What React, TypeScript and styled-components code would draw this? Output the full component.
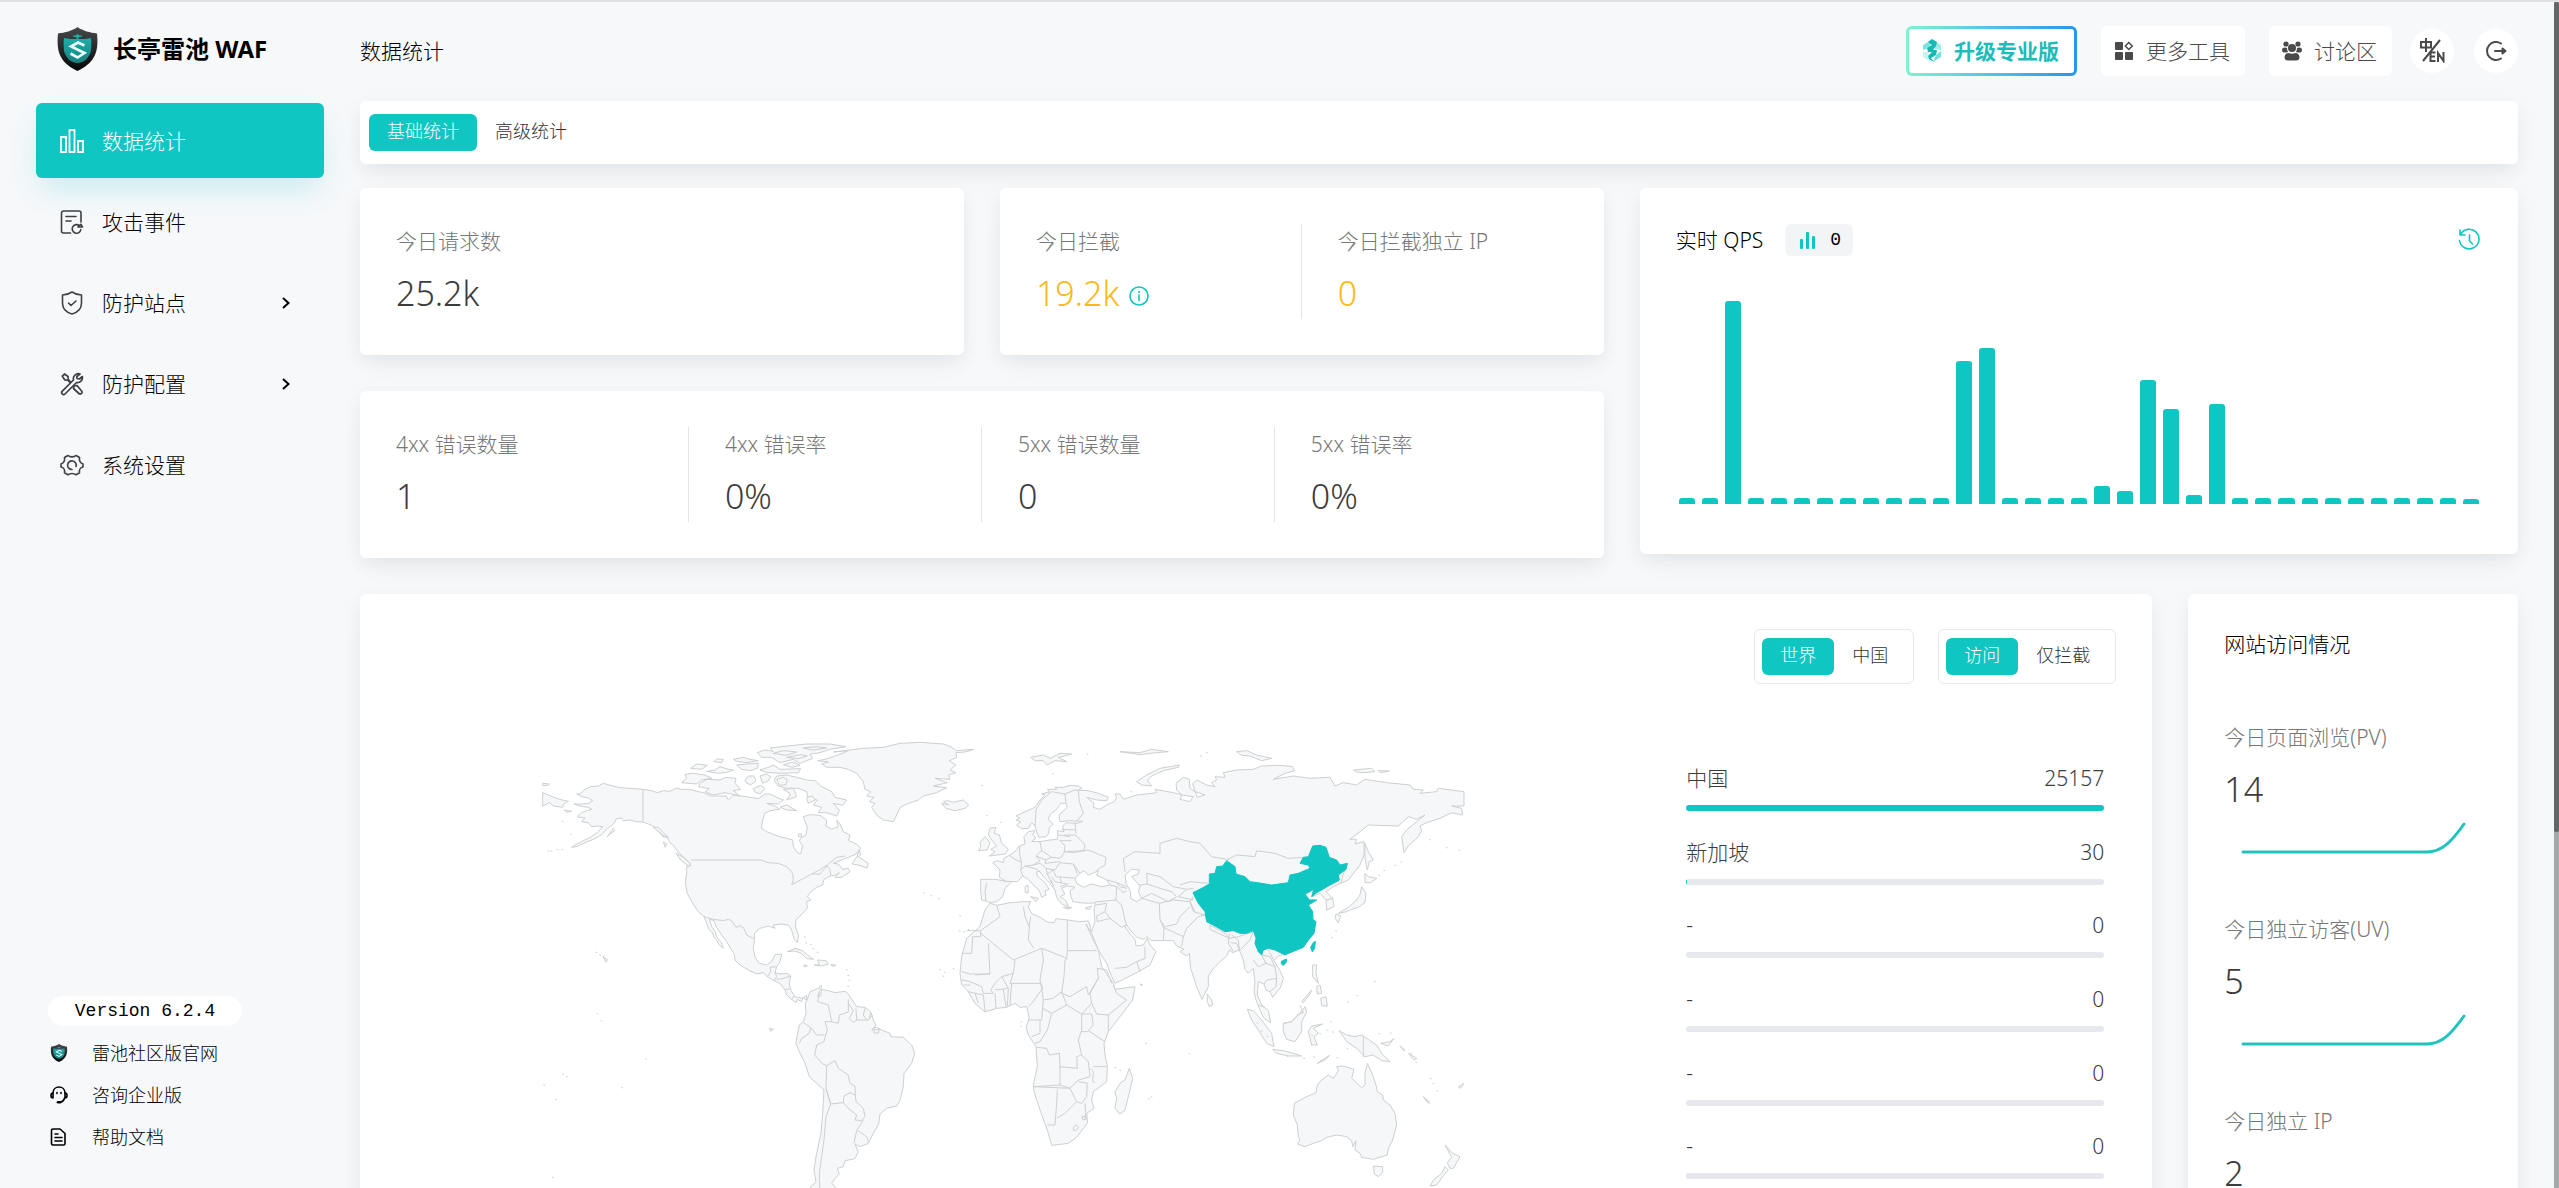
import React, { useState } from "react";
import styled, { createGlobalStyle, css } from "styled-components";

const TEAL = "#0fc6c2";
const SANS = `"Noto Sans", "Noto Sans CJK SC", sans-serif`;
const MONO = `"Liberation Mono", monospace`;

const GlobalStyle = createGlobalStyle`
  * { box-sizing: border-box; }
  body {
    margin: 0;
    background: #f6f8fa;
    font-family: ${SANS};
    font-size: 21px;
    font-weight: 300;
    line-height: 36px;
    color: #000;
  }
  button { font: inherit; color: inherit; border: 0; background: none; padding: 0; cursor: pointer; }
  a { color: inherit; text-decoration: none; }
  svg { display: block; flex: none; }
  h1, h2, ul { margin: 0; padding: 0; }
  ul { list-style: none; }
`;

/* ---------- shell ---------- */

const Shell = styled.div`
  display: flex;
  height: 100vh;
  overflow: hidden;
  border-top: 2px solid #dfe1e3;
`;

const Sidebar = styled.aside`
  flex: 0 0 360px;
  display: flex;
  flex-direction: column;
  padding: 0 36px 33px;
`;

const Brand = styled.div`
  display: flex;
  align-items: center;
  gap: 15px;
  height: 101px;
  padding: 0 21px 8px;
  font-size: 24px;
  font-weight: 700;
`;

const Nav = styled.nav`
  display: flex;
  flex-direction: column;
  gap: 6px;
  flex: 1;
`;

const NavItem = styled.a<{ $active?: boolean }>`
  display: flex;
  align-items: center;
  gap: 18px;
  height: 75px;
  padding: 0 34px 0 24px;
  border-radius: 6px;
  ${(p) =>
    p.$active &&
    css`
      color: #fff;
      background: ${TEAL};
      box-shadow: 0 15px 30px -6px rgba(15, 198, 194, 0.22);
    `}
  & > svg:first-child { color: ${(p) => (p.$active ? "#fff" : "#3d4045")}; }
`;

const NavText = styled.span`
  flex: 1;
`;

const SideFoot = styled.footer`
  display: flex;
  flex-direction: column;
  align-items: flex-start;
  gap: 6px;
  padding-left: 12px;
  font-size: 18px;
`;

const Version = styled.div`
  width: 194px;
  margin-bottom: 3px;
  border-radius: 15px;
  background: #fff;
  font: 400 18px/30px ${MONO};
  text-align: center;
`;

const FootLink = styled.a`
  display: flex;
  align-items: center;
  gap: 24px;
  padding-left: 2px;
`;

const Main = styled.main`
  flex: 1;
  min-width: 0;
  padding-right: 41px;
`;

const TopBar = styled.header`
  display: flex;
  align-items: center;
  justify-content: space-between;
  height: 99px;
  padding-bottom: 2px;
`;

const PageTitle = styled.h1`
  font-size: 21px;
  font-weight: 300;
`;

const Actions = styled.div`
  display: flex;
  align-items: center;
  gap: 24px;
  color: #4a4a4a;
`;

const ActionButton = styled.button`
  display: flex;
  align-items: center;
  gap: 12px;
  height: 50px;
  padding: 0 15px 0 13px;
  border-radius: 6px;
  background: #fff;
`;

const UpgradeButton = styled(ActionButton)`
  border: 3px solid transparent;
  background:
    linear-gradient(#fff, #fff) padding-box,
    linear-gradient(90deg, #7cf5cf, #2196f3) border-box;
  color: #1cbcb9;
  font-weight: 700;
`;

const RoundGroup = styled.div`
  display: flex;
  gap: 20px;
  margin-left: -6px;
`;

const RoundButton = styled.button`
  display: grid;
  place-items: center;
  width: 44px;
  height: 44px;
  border-radius: 50%;
  background: #fff;
`;

/* ---------- cards ---------- */

const Card = styled.section`
  background: #fff;
  border-radius: 6px;
  box-shadow: 0 6px 18px rgba(20, 30, 40, 0.06), 0 15px 30px -6px rgba(20, 30, 40, 0.03);
`;

const TabBar = styled(Card)`
  display: flex;
  align-items: center;
  height: 63px;
  padding: 0 9px;
  margin-bottom: 24px;
`;

const Tab = styled.button<{ $active?: boolean }>`
  height: 37px;
  padding: 0 18px 2px;
  border-radius: 6px;
  font-size: 18px;
  line-height: 33px;
  color: ${(p) => (p.$active ? "#fff" : "#333")};
  background: ${(p) => (p.$active ? TEAL : "transparent")};
`;

const Grid = styled.div`
  display: grid;
  grid-template-columns: repeat(12, minmax(0, 1fr));
  gap: 36px;
  align-items: start;
`;

const Stats = styled.div`
  grid-column: span 7;
  display: grid;
  grid-template-columns: 1fr 1fr;
  gap: 36px;
`;

const StatCard = styled(Card)<{ $wide?: boolean }>`
  display: grid;
  grid-auto-flow: column;
  grid-auto-columns: minmax(0, 1fr);
  padding: 36px;
  grid-column: ${(p) => (p.$wide ? "span 2" : "auto")};
`;

const Stat = styled.div<{ $warn?: boolean }>`
  & + & { padding-left: 36px; }
  &:not(:last-child) { border-right: 1px solid #e3e5e8; }
  color: ${(p) => (p.$warn ? "#fbb91b" : "#3c3c3c")};
`;

const Label = styled.div`
  line-height: 34px;
  color: #777;
`;

const Value = styled.div`
  display: flex;
  align-items: center;
  gap: 10px;
  padding-top: 9px;
  font-size: 34px;
  line-height: 52px;
  & > svg { margin-top: 6px; }
`;

const QpsCard = styled(Card)`
  grid-column: span 5;
  padding: 36px 36px 50px;
`;

const QpsHead = styled.header`
  display: flex;
  align-items: center;
  gap: 22px;
  height: 32px;
  & > :last-child { margin-left: auto; color: ${TEAL}; }
`;

const CardTitle = styled.h2`
  font-size: 21px;
  font-weight: 300;
`;

const QpsBadge = styled.span`
  display: flex;
  align-items: center;
  gap: 15px;
  height: 32px;
  padding: 0 12px 0 15px;
  border-radius: 6px;
  background: #f3f4f5;
  font: 400 18px/32px ${MONO};
`;

const Bars = styled.div`
  display: flex;
  align-items: flex-end;
  gap: 7px;
  height: 248px;
  padding: 0 3px;
`;

const Bar = styled.div`
  flex: 1;
  border-radius: 3px 3px 0 0;
  background: ${TEAL};
`;

/* ---------- map ---------- */

const MapCard = styled(Card)`
  grid-column: span 10;
  padding: 35px 36px 36px;
`;

const Switches = styled.div`
  display: flex;
  justify-content: flex-end;
  gap: 24px;
`;

const Switch = styled.div`
  display: flex;
  padding: 8px 7px;
  border: 1px solid #e6e8eb;
  border-radius: 6px;
`;

const MapBody = styled.div`
  display: flex;
  align-items: flex-start;
  gap: 82px;
  padding: 36px 12px 0 0;
`;

const MapArea = styled.div`
  flex: 1;
  display: flex;
  justify-content: center;
  align-items: flex-start;
  & > svg { width: 100%; max-width: 960px; height: auto; }
`;

const Ranks = styled.ul`
  flex: 0 0 418px;
  display: grid;
  grid-auto-rows: 1fr;
  height: 442px;
  margin-top: 40px;
  color: #3c3c3c;
`;

const Rank = styled.li`
  display: flex;
  flex-direction: column;
  gap: 9px;
`;

const RankRow = styled.div`
  display: flex;
  justify-content: space-between;
`;

const Track = styled.div`
  height: 6px;
  border-radius: 3px;
  background: #e6e8ed;
  overflow: hidden;
`;

const Fill = styled.div`
  height: 6px;
  background: ${TEAL};
`;

const VisitCard = styled(Card)`
  grid-column: span 2;
  padding: 32px 36px;
`;

const Visit = styled.div`
  height: 156px;
  margin-top: 36px;
  color: #3c3c3c;
`;

const VisitList = styled.div`
  padding-top: 22px;
`;

const Spark = styled.svg`
  margin: 4px 0 0 15px;
`;

const ScrollTrack = styled.div`
  position: fixed;
  top: 2px;
  right: 0;
  bottom: 0;
  width: 5px;
  background: #a6a9a9;
`;

const ScrollThumb = styled.div`
  height: 70%;
  border-radius: 2px;
  background: #626665;
`;

/* ---------- icons ---------- */

const Shield = ({ w, h }: { w: number; h: number }) => (
  <svg width={w} height={h} viewBox="0 0 41 44">
    <defs>
      <linearGradient id="shieldBody" x1="0" y1="0" x2="0" y2="1">
        <stop offset="0" stopColor="#46494b" />
        <stop offset="1" stopColor="#060707" />
      </linearGradient>
      <linearGradient id="shieldDisc" x1="0" y1="0" x2="0" y2="1">
        <stop offset="0" stopColor="#1fb5b0" />
        <stop offset="1" stopColor="#17807f" />
      </linearGradient>
    </defs>
    <path d="M20.500 0C15 4 8 5.500 1 6.500C-.5 22 1 35 20.500 44C40 35 41.500 22 40 6.500C33 5.500 26 4 20.500 0Z" fill="url(#shieldBody)" />
    <path d="M20.500 7L22.500 8.500H25.500L24 10H21.500V12C26 12 30 12 34 11C34.500 14 34.500 18 34 24C32 31 27 36 20.500 36C14 36 9 31 7 24C6.500 18 6.500 14 7 11C11 12 15 12 19.500 12V10H17L15.500 8.500H18.500Z" fill="url(#shieldDisc)" />
    <path d="M27.500 18.500L21 15.500L14 19.500L27.500 26L20.500 30.500L13.500 26.500" fill="none" stroke="#e8fffd" strokeWidth="2.600" />
  </svg>
);

type IconProps = { size?: number; box?: number; children: React.ReactNode; sw?: number };
const Line = ({ size = 24, box = 24, sw = 1.6, children }: IconProps) => (
  <svg width={size} height={size} viewBox={`0 0 ${box} ${box}`} fill="none" stroke="currentColor" strokeWidth={sw} strokeLinecap="round" strokeLinejoin="round">
    {children}
  </svg>
);

const StatsIcon = () => (
  <Line sw={1.8}>
    <path strokeLinejoin="miter" d="M1 8H6V23H1ZM9.500 1H14.500V23H9.500ZM18 12H23V23H18Z" />
  </Line>
);
const EventsIcon = () => (
  <Line>
    <path d="M10.500 23H3.500A2 2 0 0 1 1.500 21V3A2 2 0 0 1 3.500 1H19A2 2 0 0 1 21 3V12M6 6.500H16M6 11H11" />
    <path d="M19.500 15.800A4.300 4.300 0 1 0 20.800 19.500M18 17H22.500L20.800 14.300Z" />
  </Line>
);
const SiteIcon = () => (
  <Line>
    <path d="M12 1C9 3 5.500 4 2.500 4V12C2.500 17.500 6.500 21.500 12 23C17.500 21.500 21.500 17.500 21.500 12V4C18.500 4 15 3 12 1ZM8.500 12L11 14.500L16 10" />
  </Line>
);
const ConfigIcon = () => (
  <Line sw={1.7}>
    <path d="M10.500 10L8.300 7.600L8 4.500L4.500 2L2.300 4.200L4.700 7.800L7.800 8.200L10 10.500M14 14L17 13.500L22 19.500Q22.500 22 19.500 22L13.500 16.500Z" />
    <path d="M20 2A5 5 0 0 0 13.500 8L2.300 19.200A1.800 1.800 0 0 0 5 22L16.500 10.500A5 5 0 0 0 22.300 4.500L19.500 7L17 6.500L16.800 4.500Z" />
  </Line>
);
const SettingIcon = () => (
  <Line>
    <path d="M8 2.500C10 4.300 14 4.300 16 2.500L19.500 4.500C19 7.500 20.500 10 23 11V14C20.500 14.500 19 17 19.500 19.800L16 21.800C14 20 10 20 8 21.800L4.500 19.800C5 17 3.500 14.500 1 14V11C3.500 10 5 7.500 4.500 4.500Z" />
    <path d="M12 16.500A4.300 4.300 0 1 1 16 13.500" />
  </Line>
);
const Chevron = () => (
  <svg width="8" height="12" viewBox="0 0 8 12" fill="none" stroke="#000" strokeWidth="2">
    <path d="M1 1L6.500 6L1 11" />
  </svg>
);
const Headset = () => (
  <Line size={18} box={18} sw={1.6}>
    <path d="M3 7C3 -1 15 -1 15 7M14.500 12C14 14.500 12 16 9.500 16.200" />
    <path d="M3 7Q1 7 1 9.500Q1 12 3 12ZM15 7Q17 7 17 9.500Q17 12 15 12ZM7 6.500V7.500M11 6.500V7.500" />
    <path d="M8 16.200H10" strokeWidth="2.600" />
  </Line>
);
const Doc = () => (
  <Line size={18} box={18} sw={1.6}>
    <path d="M3 1H10L15 5.500V15.500A1.500 1.500 0 0 1 13.500 17H3A1.500 1.500 0 0 1 1.500 15.500V2.500A1.500 1.500 0 0 1 3 1ZM5 6H8M5 9.500H12M5 13H12" />
  </Line>
);
const UpgradeIcon = () => (
  <svg width="20" height="24" viewBox="0 0 20 24">
    <path d="M9 1L1 6V11L7 9L9 5Z" fill="#7fe3df" />
    <path d="M1 13L7 13L6 18L9 23L1 18Z" fill="#c5f3f1" />
    <path d="M13 2L19 6V11L13 10Z" fill="#9feae7" />
    <path d="M19 12V18L11 23L14 16Z" fill="#74dfdb" />
    <path d="M10 0L15 3L14 7L11 11L15 11L14 16L9 19L12 23L7 20L6 17L10 13L6 13L5 9L10 6L6 3Z" fill="#17b9b4" />
  </svg>
);
const ToolsIcon = () => (
  <svg width="20" height="20" viewBox="-1 -1 20 20" fill="#4a4a4a">
    <rect width="8" height="8" rx="1" />
    <rect y="10" width="8" height="8" rx="1" />
    <rect x="10" y="10" width="8" height="8" rx="1" />
    <path d="M13.800 .5L17.300 4L13.800 7.500L10.300 4Z" fill="none" stroke="#4a4a4a" strokeWidth="1.500" />
  </svg>
);
const PeopleIcon = () => (
  <svg width="20" height="20" viewBox="0 0 20 20" fill="#4a4a4a">
    <circle cx="4" cy="3" r="2.600" />
    <circle cx="16" cy="3" r="2.600" />
    <circle cx="10" cy="7" r="4" />
    <path d="M0 9Q0 6.500 3 6.500L5 7Q5 9.500 6 11L4 11.500Q0 12 0 9ZM20 9Q20 6.500 17 6.500L15 7Q15 9.500 14 11L16 11.500Q20 12 20 9Z" />
    <path d="M2.500 16Q3 12.300 6.500 12Q10 13.500 13.500 12Q17 12.300 17.500 16Q17.500 19.500 14 19.500H6Q2.500 19.500 2.500 16Z" />
  </svg>
);
const LangIcon = () => (
  <svg width="25" height="25" viewBox="0 0 25 25" fill="none" stroke="#4a4a4a" strokeWidth="2">
    <path d="M1 4H11V9.500H1ZM6 0V14M20 2L3 23" />
    <path d="M15.500 14.500H10.500V23H15.500M10.500 18.500H15M18 24V15L23.500 23V14" />
  </svg>
);
const ExitIcon = () => (
  <Line size={22} box={22} sw={2}>
    <path d="M16 3.500A9 9 0 1 0 16 18.500M10 11H20" />
    <path d="M17.500 8.500L20.500 11L17.500 13.500Z" fill="currentColor" />
  </Line>
);
const InfoIcon = () => (
  <svg width="20" height="20" viewBox="0 0 20 20" fill="none" stroke={TEAL} strokeWidth="1.600">
    <circle cx="10" cy="10" r="9" />
    <path d="M10 8.500V15M10 5V7" />
  </svg>
);
const MiniBars = () => (
  <svg width="15" height="17" viewBox="0 0 15 17" fill={TEAL}>
    <rect y="7" width="3" height="10" rx="1" />
    <rect x="6" width="3" height="17" rx="1" />
    <rect x="12" y="4" width="3" height="13" rx="1" />
  </svg>
);
const HistoryIcon = () => (
  <Line size={24} box={24} sw={1.6}>
    <path d="M2.500 6.500A9.800 9.800 0 1 1 1.500 12.500M2 2V7H7M11.500 7V13L14.500 16" />
  </Line>
);

/* ---------- world map data ---------- */

const WEST_LAND = [
  "369,208 340,206 300,203 262,194 250,190 235,198 212,200 195,208 180,222 170,222 185,230 205,234 218,242 205,250 185,252 162,252 180,258 205,262 215,268 200,272 185,278 172,290 180,292 195,294 185,305 205,308 215,320 235,318 248,320 235,335 215,350 190,362 165,375 155,382 175,378 200,366 225,356 245,344 262,326 280,312 290,296 305,294 310,302 330,300 350,305 369,306 385,312 400,318 410,330 425,345 430,352 440,350 450,368 462,378 470,390 480,402 495,415 508,428 512,438 500,440 500,460 496,490 502,520 515,545 535,575 552,590 560,610 565,625 578,640 582,652 590,660 598,675 610,685 604,668 590,650 585,635 575,620 568,598 582,602 590,622 605,645 620,665 635,690 642,700 645,720 660,735 685,750 710,762 730,758 742,770 762,782 780,790 795,810 800,825 815,838 828,848 832,838 845,845 850,832 860,842 860,826 845,835 825,830 812,810 808,790 812,768 800,760 780,762 765,758 770,740 780,725 785,702 765,704 755,725 740,735 718,730 705,712 700,685 704,655 703,640 720,625 745,618 765,625 760,615 785,612 805,615 815,630 822,655 832,668 836,648 826,620 828,600 840,588 862,565 860,545 872,540 862,530 872,515 890,502 908,495 912,478 930,468 948,465 958,458 945,472 965,472 990,455 985,445 968,448 955,432 940,430 965,420 990,410 1008,402 1022,385 1010,372 985,362 990,345 970,335 960,312 950,300 955,320 935,328 918,318 920,300 900,286 870,284 850,290 855,305 862,320 858,345 842,355 838,362 848,378 842,402 832,398 820,380 818,360 800,355 785,352 765,345 740,335 724,325 728,300 735,280 750,272 780,268 765,258 740,250 775,252 790,240 770,232 750,222 735,222 715,236 690,232 665,228 640,226 625,240 618,228 575,228 550,218 530,214 510,208 485,208 470,204 450,214 430,212 412,218 395,212",
  "862,838 870,815 895,805 902,795 905,800 898,815 893,830 902,828 905,808 925,812 945,818 975,814 985,822 1000,845 1010,860 1035,862 1052,875 1060,900 1068,915 1055,930 1080,928 1110,940 1112,950 1150,952 1175,975 1184,1000 1175,1030 1152,1060 1150,1100 1140,1140 1130,1158 1100,1165 1080,1182 1076,1212 1060,1240 1045,1270 1020,1280 1005,1272 1015,1295 1005,1316 975,1322 970,1340 952,1345 958,1362 945,1375 935,1390 950,1404 960,1450 940,1510 890,1510 880,1450 872,1400 888,1385 882,1350 888,1310 903,1240 908,1180 912,1110 890,1090 868,1070 855,1030 838,995 828,970 832,945 838,915 850,905 858,880 856,850",
  "893,122 915,118 955,105 985,92 940,96 1030,85 1090,82 1140,70 1200,67 1270,72 1292,80 1310,92 1362,88 1335,96 1308,98 1310,112 1288,122 1308,135 1290,150 1308,158 1285,165 1290,178 1245,175 1282,188 1240,198 1280,203 1250,218 1210,228 1195,240 1160,252 1140,262 1130,285 1120,305 1090,300 1070,285 1055,262 1065,250 1048,245 1062,232 1040,228 1052,215 1035,208 1030,185 1010,160 985,148 960,142 920,142 905,132 925,126",
  "1265,250 1285,254 1270,244 1285,242 1300,247 1330,240 1346,255 1335,265 1305,272 1278,265",
  "495,163 520,160 555,165 575,175 545,180 530,192 485,188 500,175",
  "540,190 560,178 600,180 618,172 648,175 645,190 662,208 640,212 660,228 615,218 580,225 555,215 568,206 535,200",
  "762,182 770,168 800,165 830,172 860,180 885,182 905,200 935,215 945,232 980,240 968,256 940,250 958,270 950,288 920,278 895,278 905,262 880,255 892,240 865,235 860,215 835,205 800,205 775,198",
  "712,98 735,90 760,94 750,84 800,78 860,72 930,72 978,80 930,88 900,98 870,102 878,115 840,130 820,118 780,128 755,112 725,112",
  "720,150 745,142 760,135 780,148 842,146 835,158 780,160 740,157",
  "512,145 530,132 562,136 545,148",
  "560,154 585,150 600,140 625,148 640,150 620,157 595,160",
  "582,125 590,117 610,118 605,128",
  "640,118 670,112 690,118 715,122 680,128 650,124",
  "650,135 680,132 715,130 712,145 690,152 665,148",
  "675,182 685,168 702,168 708,182 692,195 678,188",
  "720,168 740,162 752,170 745,182 728,190",
  "700,206 722,196 735,205 720,222 705,216",
  "770,178 790,172 802,180 798,194 778,196",
  "790,208 820,205 830,230 800,240 812,222",
  "860,232 878,228 886,240 865,250",
  "780,262 800,255 830,272 800,270",
  "835,342 845,342 845,350 836,350",
  "760,100 790,92 830,96 800,106",
  "800,112 840,104 862,108 835,116",
  "790,134 820,126 840,136 815,142",
  "850,84 890,80 920,84 880,90",
  "400,322 415,322 430,338 445,352 432,348 415,334",
  "430,366 440,372 436,382",
  "1018,388 1022,405 1015,410 1045,430 1040,445 1020,436 996,432 1012,408",
  "468,400 490,412 512,432 505,438 482,420",
  "802,695 825,685 848,692 862,704 880,718 860,716 845,700 825,693",
  "882,735 898,735 893,720 918,722 925,732 905,738",
  "850,735 862,737 855,741",
  "932,734 947,735 942,740",
  "68,218 92,228 118,238 145,244 130,252 128,262 100,258 88,248 68,258",
  "68,190 88,192 84,196 68,197",
  "132,270 155,274 140,277",
  "250,712 262,718 258,727",
  "262,350 280,325 284,332 268,344",
  "748,925 760,928 752,934",
];

const WEST_BORDERS = [
  "M369,208V304",
  "M512,420H722L745,428 775,430 800,440 818,460 820,480 815,494 845,478 875,462 905,446 918,436 930,448 932,466M875,462H900L925,432 950,412 975,408",
  "M552,590 580,598 610,602 625,598 635,602 648,622 660,617 672,625 680,645 703,657",
  "M742,770 752,755 750,742 768,740M762,782 770,770 765,758M770,778 790,775 812,768M795,810 808,806M815,838 822,828",
  "M898,818 893,845 925,855 935,905 955,910 958,885 985,876 985,838M985,850 1000,872 988,895 1000,908 1010,900 1008,865M1010,900 1045,900 1058,885M1035,865 1030,885 1040,900M1052,878 1046,898",
  "M935,905 915,905 922,928 912,965 890,975 884,1005 908,1032 920,1037 945,1022 955,1045 985,1065 990,1090 1005,1098 1006,1125",
  "M850,908 872,922 868,940 845,955 838,970M872,922 890,945 914,945",
  "M920,1037 918,1105 932,1152 970,1148 972,1128 990,1118 1006,1125 1008,1145 1030,1165 1035,1190 1025,1202 1005,1200 1010,1185 985,1165 970,1148",
  "M918,1105 932,1152 918,1190 912,1260 905,1310 898,1360 902,1500M1030,1200 1010,1232 1002,1270M1012,1230 1042,1252 1045,1268",
  "M1062,922 1078,925 1075,940 1062,938Z",
];

const EAST_LAND = [
  // Eurasia
  "62,478 105,478 138,484 118,472 120,450 98,428 112,422 130,428 132,415 148,406 165,395 178,378 195,372 192,350 205,335 225,332 218,345 228,355 215,364 240,365 270,360 292,358 294,345 292,332 312,335 308,318 318,308 350,310 368,304 330,302 300,305 297,285 322,262 318,250 302,250 290,268 272,282 264,298 280,312 268,322 266,340 258,350 236,352 230,335 225,318 215,308 205,325 185,326 170,315 182,305 168,300 180,295 168,288 195,275 225,262 240,240 255,225 245,222 270,215 262,208 290,208 285,202 310,202 330,196 355,198 365,205 355,210 385,212 415,220 445,232 440,242 410,240 380,232 402,250 400,262 420,268 440,255 462,245 470,235 465,222 480,222 490,238 530,225 560,222 590,218 585,208 640,218 665,225 660,238 690,245 700,230 665,225 650,210 648,190 670,172 688,178 690,205 705,215 712,232 735,225 705,215 698,192 710,180 740,195 765,200 755,188 770,180 765,170 795,172 790,158 830,150 880,148 905,138 960,136 998,140 1003,152 970,162 940,178 1000,168 1050,175 1110,172 1125,198 1150,188 1190,195 1215,178 1280,188 1350,195 1360,208 1390,210 1380,220 1430,215 1435,205 1512,215 1512,258 1475,258 1505,265 1508,285 1475,278 1440,295 1400,308 1380,318 1385,332 1375,350 1345,378 1332,398 1325,350 1340,330 1370,305 1395,285 1370,298 1345,290 1315,318 1225,315 1200,335 1170,358 1190,358 1185,372 1212,365 1212,405 1200,435 1165,480 1142,490 1120,500 1098,515 1118,535 1122,560 1100,570 1098,540 1080,520 1055,530 1060,508 1035,525 1048,540 1070,540 1045,555 1058,575 1062,640 1030,680 985,700 955,708 942,722 960,752 970,775 962,802 938,832 930,815 918,810 912,792 895,785 892,825 905,855 925,872 932,908 912,895 900,870 888,840 882,815 885,785 880,745 865,760 855,748 850,720 838,690 818,698 808,690 800,708 780,725 760,745 745,768 745,800 726,838 710,800 692,745 688,700 680,708 660,695 672,688 650,678 640,662 610,662 575,662 560,650 552,658 530,652 510,630 500,615 494,618 510,642 525,658 528,678 550,675 562,655 568,672 588,695 570,735 530,758 465,790 455,770 440,730 415,690 395,640 385,618 395,635 405,605 402,570 406,548 385,550 360,548 338,545 332,525 330,512 345,502 322,498 305,505 315,522 300,530 318,542 325,560 305,552 290,532 285,510 270,490 250,470 240,455 230,455 232,468 252,485 268,508 255,512 258,525 245,532 238,512 215,490 205,478 188,468 172,485 155,485 135,505 128,530 110,545 90,548 78,543 65,540 62,510",
  // Africa
  "90,550 110,556 150,548 190,545 212,545 205,560 214,580 240,592 262,606 282,608 288,596 325,600 355,605 385,603 392,622 388,630 378,612 395,650 415,690 425,740 460,790 465,808 525,800 518,840 480,890 445,935 432,970 435,1005 442,1040 440,1085 400,1115 395,1140 402,1165 380,1180 383,1208 350,1252 325,1270 275,1276 262,1230 240,1170 222,1115 220,1095 232,1040 228,980 205,945 198,920 208,895 200,860 180,862 165,850 140,862 110,865 75,876 45,850 25,815 5,795 0,760 5,710 20,655 60,620 75,570",
  // Islands
  "465,1115 480,1090 495,1080 508,1045 518,1075 510,1110 495,1170 480,1182 465,1165 470,1135",
  "1003,1150 1000,1185 1012,1215 1015,1250 1020,1260 1012,1272 1035,1280 1060,1270 1085,1262 1100,1252 1130,1245 1160,1250 1175,1262 1178,1280 1188,1262 1185,1290 1200,1300 1205,1312 1240,1318 1282,1305 1285,1285 1298,1260 1310,1215 1305,1180 1290,1155 1270,1140 1268,1125 1252,1115 1248,1095 1238,1065 1222,1030 1215,1060 1215,1095 1205,1103 1175,1075 1182,1048 1150,1038 1130,1040 1135,1052 1120,1075 1105,1065 1085,1080 1072,1095 1068,1118 1040,1130",
  "1240,1338 1268,1340 1268,1358 1255,1370 1243,1362",
  "1455,1275 1478,1300 1500,1310 1480,1345 1470,1345 1462,1328 1475,1312",
  "1455,1340 1465,1350 1448,1370 1430,1395 1410,1398 1420,1380 1445,1360",
  "742,822 755,840 758,855 748,860 742,845",
  "90,325 108,322 102,340 118,345 125,370 145,388 135,402 88,408 105,395 92,388 110,378 95,360 85,345",
  "60,368 75,350 90,368 82,390 55,392 62,380",
  "530,185 560,165 600,145 658,135 655,142 610,152 575,168 562,182 575,198 545,195",
  "212,112 250,105 270,115 300,100 335,102 295,112 320,125 285,122 262,135 250,122 225,122",
  "480,95 540,98 575,88 625,95 570,100 540,104",
  "830,95 860,92 890,105 935,115 905,122 870,108 845,106",
  "1180,150 1235,145 1245,155 1210,158 1190,156",
  "1255,152 1288,153 1262,158",
  "1215,370 1225,395 1240,420 1228,425 1222,450 1215,415",
  "1215,460 1225,470 1250,475 1232,488 1215,488",
  "1205,500 1218,520 1215,548 1195,562 1175,568 1160,575 1135,580 1165,562 1185,545 1200,525",
  "1128,582 1142,588 1135,608 1125,595",
  "862,868 880,872 905,900 935,940 942,980 920,970 895,930 875,900",
  "938,988 970,992 1000,1000 1025,1008 985,1008 950,1000",
  "970,910 995,905 1020,880 1035,860 1040,875 1025,905 1025,935 1005,965 980,958 970,935",
  "1045,935 1055,918 1088,912 1060,925 1075,940 1062,950 1072,975 1055,975 1050,955",
  "1058,735 1070,735 1068,760 1075,790 1058,770",
  "1082,835 1098,830 1102,858 1085,858",
  "1070,800 1080,795 1085,820 1072,822",
  "1025,845 1055,810 1050,822 1030,848",
  "1138,932 1160,945 1185,950 1205,945 1250,975 1265,1000 1290,1025 1265,1022 1240,1005 1215,1010 1190,985 1160,965",
  "1262,970 1290,965 1302,955 1285,978",
  "1072,1030 1110,1005 1095,1020",
  "1320,978 1335,990 1330,992",
  "1345,1000 1370,1015 1362,1020",
  "1390,1130 1410,1148 1405,1150",
  "1495,1100 1512,1090 1502,1105",
  "212,530 235,535 228,545",
  "195,500 204,495 205,518 196,518",
  "310,562 335,562 325,567",
  "375,565 395,558 388,568",
  "540,792 548,794 544,797",
];

const EAST_WATER = [
  "350,490 345,475 360,460 372,452 385,465 402,458 415,452 410,465 440,480 450,495 425,500 395,492 370,502",
  "495,465 515,448 538,450 535,462 515,470 528,485 540,498 535,515 545,535 530,545 512,535 512,515 498,490",
];

const EAST_BORDERS = [
  // Western and central Europe
  "M138,484 155,485M80,490 75,515 78,543M148,406 160,415 185,428 182,450 188,468M178,378 180,410 185,428M240,365 245,392 228,408 240,422 220,435 195,438 182,450M245,392 275,412 300,415 312,400 315,378 300,362M228,408 258,420 275,412M258,420 255,430 300,425M220,435 240,430 258,445 285,450 300,428M195,438 232,448 240,455M258,445 262,462 280,450 288,470 350,475M300,428 340,432 352,462M262,462 275,490M275,470 285,485 320,492M300,470 305,490M272,480 282,500M300,500 325,492",
  "M312,345 345,345 360,358 375,375 372,392 315,395M295,345 330,350M300,362 335,362M305,328 345,330M345,308 348,340M315,395 340,398 385,390 438,412 435,435 410,450M340,432 360,460",
  "M225,318 228,270 245,240 275,215 315,222 318,250M315,222 345,210 355,212 358,245 370,280 350,305",
  // Caucasus and Middle East
  "M440,480 470,488 500,500M450,495 470,500 490,518 500,512M470,500 468,540 405,546M470,488 480,500 500,505M468,540 485,555 495,600 500,618M406,555 440,550 435,575 410,588M435,575 450,595 485,622 500,615M410,588 412,605 450,595M545,535 598,550 600,600 612,625 610,662M598,550 640,540 690,545 705,575M600,600 615,620 650,612 660,590 690,560M610,622 670,650 680,625 715,590 735,585M670,650 665,680M465,745 500,742 530,725 555,715 555,680M530,725 540,755",
  // Central Asia and Russia
  "M495,455 490,415 525,395 600,400 600,370 650,355 690,365 720,370 755,410 800,418M800,420 830,405 885,410 890,392 945,400 985,415 1030,412M560,460 562,492 600,505 635,515 650,530M560,460 600,470 640,500 680,508 655,530 700,540M538,495 562,492M660,495 690,485 745,490M545,535 575,520 625,545 650,530M680,508 700,505M690,545 700,530",
  "M1162,430 1150,462 1142,490M1070,518 1110,495 1138,482",
  // South and East Asia
  "M735,585 700,575 690,545M750,615 795,640 808,655 750,628ZM808,640 805,670 820,695M808,655 835,650 880,635M815,645 835,660 838,690 830,670 812,668M880,635 870,660 840,690M885,670 905,705 918,730 895,740 880,720M905,705 930,710 945,740 950,775 920,780 912,792M918,730 945,740M925,690 942,722M950,775 948,800 930,815M895,855 915,862M1020,855 1030,878 1015,882 995,905 970,910M1210,948V1012M1098,540 1118,535",
  // North Africa
  "M110,556 120,590 85,615 62,632H20M62,632V650H38L35,700H5M62,640 160,720 245,685 322,715M85,670 90,762 45,765M90,762H30L5,755M190,560 195,590 208,620M208,620 212,590M208,620 205,660 222,685M322,600V692H410M322,692 320,718 315,720 312,770 305,820M245,685 250,720 240,780 245,805M165,720 160,760 125,770 105,790 92,810M160,760 150,790 240,790",
  // West Africa
  "M5,780 30,785 65,800 70,820 100,820 92,810M10,795H30M25,815 45,820 55,850M45,820 70,825 75,875M105,820 108,865M130,808 138,860M145,805 142,860M155,790 150,855M125,770 145,805 105,810M240,785 248,805 215,850 205,860",
  // Central and East Africa
  "M245,805 250,840 245,900H205M250,840 280,835 305,815 320,855 275,880 248,865M275,880 262,930 240,965 225,970M240,900 240,940 215,950M305,820 330,830 380,800 385,825 415,775 412,745 440,750 455,790M415,775 390,820 395,850 365,882 320,855M395,850 410,882 445,885 500,840 470,820 460,795M445,885V935M365,882 365,930 355,960 365,1005 350,1010 352,1045 300,1040M365,882H395L400,915 385,932 435,965M365,935H385M228,982 260,985 268,1005 298,1000 300,1035M300,1035V1095L222,1100M300,1095 330,1105 355,1080 390,1070 385,1025 365,1005M390,1045 400,1055 398,1085 405,1088M400,1040H440M222,1100 330,1105M292,1108 290,1150 285,1215 262,1215M330,1105 350,1145 315,1180 290,1195M355,1085 382,1090 380,1130 365,1150 350,1145M375,1150 378,1200M340,1222 348,1215 356,1222 348,1232 340,1230ZM366,1190 376,1188 374,1200 367,1198Z",
];

const CHINA =
  "M699,518 725,505 748,492 748,462 765,460 770,440 788,438 800,422 825,440 828,462 855,470 870,485 905,490 935,495 985,488 990,465 1015,460 1050,445 1045,435 1020,430 1030,412 1045,410 1058,378 1080,376 1098,382 1108,412 1130,420 1140,435 1162,430 1158,448 1135,465 1138,480 1110,495 1070,518 1055,530 1062,508 1035,522 1048,540 1070,540 1045,555 1058,575 1058,598 1068,605 1062,640 1045,660 1030,682 985,700 975,705 945,690 925,685 910,690 905,705 895,695 885,670 888,655 880,632 860,640 840,640 820,632 795,635 765,618 740,605 735,575 715,550Z";
const CHINA_ISLES = "M1060,668 1066,664 1064,684 1057,696 1052,682ZM964,724 980,717 978,728 970,736 964,732Z";

const SPECKS: [number, number][] = [
  [83, 392], [92, 392], [110, 388], [125, 388], [150, 342], [125, 303], [226, 696], [238, 704], [248, 708],
  [230, 880], [242, 902], [376, 1016], [126, 1062], [138, 1069], [70, 1094], [106, 1138], [304, 1102], [96, 1371],
  [852, 650], [856, 668], [870, 672], [878, 685], [890, 696], [978, 748], [982, 765], [986, 780], [982, 798],
  [1210, 518], [1232, 526], [1254, 535], [1318, 586], [1316, 632], [1330, 634], [1344, 628], [1258, 748], [1272, 756],
  [1268, 768], [1384, 195], [1398, 286], [1440, 306], [1596, 160], [2040, 107], [2058, 97], [1700, 102], [1832, 214],
  [2727, 358], [2778, 382], [2816, 390], [2624, 435], [2590, 450], [2575, 465], [2642, 425], [2446, 632], [2434, 652],
  [2562, 783], [2510, 826], [2482, 845], [1876, 969], [2006, 1000], [1884, 1135], [1892, 1130], [1784, 1042], [1798, 1050],
  [1502, 905], [1500, 918], [2210, 908], [2222, 932], [2240, 948], [2374, 945], [2398, 940], [2420, 930], [2430, 905],
  [2436, 935], [2300, 1008], [2350, 1014], [2380, 1010], [2400, 1022], [2450, 1012], [2480, 985], [2576, 940], [2610, 938],
  [2730, 1075], [2738, 1090], [2750, 1112], [2672, 1000], [2686, 1026], [1298, 745],
];

const WorldMap = () => (
  <svg viewBox="0 0 2880 1500" role="img" aria-label="世界" strokeLinejoin="round">
    <g fill="#f6f7f9" stroke="#cdcfd1" strokeWidth="3">
      {WEST_LAND.map((d) => <path key={d} d={`M${d}Z`} />)}
      <path d={WEST_BORDERS.join("")} fill="none" />
      <g transform="translate(1320 0)">
        {EAST_LAND.map((d) => <path key={d} d={`M${d}Z`} />)}
        <path d={EAST_BORDERS.join("")} fill="none" />
        {EAST_WATER.map((d) => <path key={d} d={`M${d}Z`} fill="#fff" />)}
        <path d={CHINA + CHINA_ISLES} fill={TEAL} stroke={TEAL} />
      </g>
      {SPECKS.map(([x, y]) => <path key={`${x}-${y}`} d={`M${x},${y}l5,2`} />)}
    </g>
  </svg>
);

/* ---------- page data ---------- */

const NAV = [
  { text: "数据统计", icon: <StatsIcon />, active: true },
  { text: "攻击事件", icon: <EventsIcon /> },
  { text: "防护站点", icon: <SiteIcon />, more: true },
  { text: "防护配置", icon: <ConfigIcon />, more: true },
  { text: "系统设置", icon: <SettingIcon /> },
];

const QPS = [
  6, 6, 203, 6, 6, 6, 6, 6, 6, 6, 6, 6, 143, 156, 6, 6, 6, 6, 18, 13, 124, 95, 9, 100, 6, 6, 6, 6, 6, 6, 6, 6, 6, 6, 5,
];

const RANKS: [string, number][] = [["中国", 25157], ["新加坡", 30], ["-", 0], ["-", 0], ["-", 0], ["-", 0]];

const VISITS: [string, number][] = [["今日页面浏览(PV)", 14], ["今日独立访客(UV)", 5], ["今日独立 IP", 2]];

function Segmented({ options }: { options: string[] }) {
  const [current, setCurrent] = useState(options[0]);
  return (
    <Switch role="group">
      {options.map((o) => (
        <Tab key={o} $active={o === current} aria-pressed={o === current} onClick={() => setCurrent(o)}>
          {o}
        </Tab>
      ))}
    </Switch>
  );
}

export default function App() {
  const [tab, setTab] = useState("基础统计");
  return (
    <>
      <GlobalStyle />
      <Shell>
        <Sidebar>
          <Brand>
            <Shield w={41} h={44} />
            长亭雷池 WAF
          </Brand>
          <Nav>
            {NAV.map((n) => (
              <NavItem key={n.text} href="#" $active={n.active}>
                {n.icon}
                <NavText>{n.text}</NavText>
                {n.more && <Chevron />}
              </NavItem>
            ))}
          </Nav>
          <SideFoot>
            <Version>Version 6.2.4</Version>
            <FootLink href="#"><Shield w={18} h={18} />雷池社区版官网</FootLink>
            <FootLink href="#"><Headset />咨询企业版</FootLink>
            <FootLink href="#"><Doc />帮助文档</FootLink>
          </SideFoot>
        </Sidebar>
        <Main>
          <TopBar>
            <PageTitle>数据统计</PageTitle>
            <Actions>
              <UpgradeButton><UpgradeIcon />升级专业版</UpgradeButton>
              <ActionButton><ToolsIcon />更多工具</ActionButton>
              <ActionButton><PeopleIcon />讨论区</ActionButton>
              <RoundGroup>
                <RoundButton aria-label="中/EN"><LangIcon /></RoundButton>
                <RoundButton aria-label="退出"><ExitIcon /></RoundButton>
              </RoundGroup>
            </Actions>
          </TopBar>
          <TabBar>
            {["基础统计", "高级统计"].map((t) => (
              <Tab key={t} $active={t === tab} onClick={() => setTab(t)}>{t}</Tab>
            ))}
          </TabBar>
          <Grid>
            <Stats>
              <StatCard>
                <Stat><Label>今日请求数</Label><Value>25.2k</Value></Stat>
              </StatCard>
              <StatCard>
                <Stat $warn><Label>今日拦截</Label><Value>19.2k<InfoIcon /></Value></Stat>
                <Stat $warn><Label>今日拦截独立 IP</Label><Value>0</Value></Stat>
              </StatCard>
              <StatCard $wide>
                <Stat><Label>4xx 错误数量</Label><Value>1</Value></Stat>
                <Stat><Label>4xx 错误率</Label><Value>0%</Value></Stat>
                <Stat><Label>5xx 错误数量</Label><Value>0</Value></Stat>
                <Stat><Label>5xx 错误率</Label><Value>0%</Value></Stat>
              </StatCard>
            </Stats>
            <QpsCard>
              <QpsHead>
                <CardTitle>实时 QPS</CardTitle>
                <QpsBadge><MiniBars />0</QpsBadge>
                <button aria-label="历史"><HistoryIcon /></button>
              </QpsHead>
              <Bars>
                {QPS.map((v, i) => <Bar key={i} style={{ height: v }} />)}
              </Bars>
            </QpsCard>
            <MapCard>
              <Switches>
                <Segmented options={["世界", "中国"]} />
                <Segmented options={["访问", "仅拦截"]} />
              </Switches>
              <MapBody>
                <MapArea><WorldMap /></MapArea>
                <Ranks>
                  {RANKS.map(([name, count], i) => (
                    <Rank key={i}>
                      <RankRow><span>{name}</span><span>{count}</span></RankRow>
                      <Track><Fill style={{ width: `${(count / RANKS[0][1]) * 100}%` }} /></Track>
                    </Rank>
                  ))}
                </Ranks>
              </MapBody>
            </MapCard>
            <VisitCard>
              <CardTitle>网站访问情况</CardTitle>
              <VisitList>
                {VISITS.map(([label, value]) => (
                  <Visit key={label}>
                    <Label>{label}</Label>
                    <Value>{value}</Value>
                    <Spark width="228" height="40" viewBox="0 0 228 40" fill="none" stroke="#22c3bf" strokeWidth="3" strokeLinecap="round">
                      <path d="M4 33H188C203 33 213 22 225 5" />
                    </Spark>
                  </Visit>
                ))}
              </VisitList>
            </VisitCard>
          </Grid>
        </Main>
        <ScrollTrack><ScrollThumb /></ScrollTrack>
      </Shell>
    </>
  );
}
